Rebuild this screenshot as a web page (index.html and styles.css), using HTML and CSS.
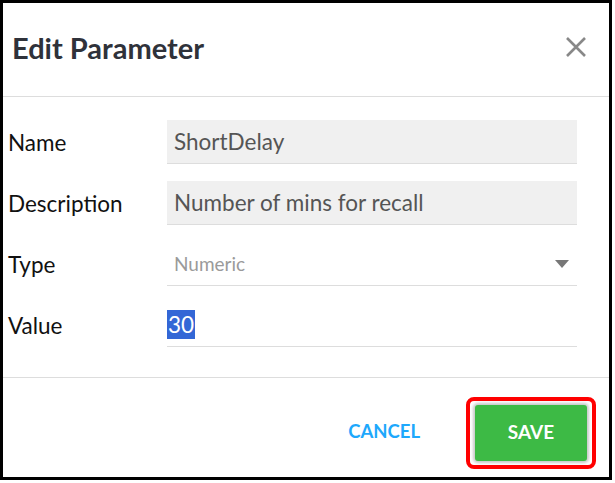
FILE: index.html
```html
<!DOCTYPE html>
<html lang="en">
<head>
    <meta charset="UTF-8">
    <meta name="viewport" content="width=device-width, initial-scale=1.0">
    <link rel="stylesheet" href="styles.css">
    <title>Edit Parameter</title>
</head>
<body>
    <div class="dialogo">
        <div class="cabecera">
            <h2 class="titulo">Edit Parameter</h2>
            <span class="cerrar">
                <svg width="22" height="22" viewBox="0 0 22 22">
                    <path d="M2 2 L20 20 M20 2 L2 20" stroke="#888" stroke-width="2.6" fill="none"/>
                </svg>
            </span>
        </div>

        <div class="cuerpo">
            <div class="fila">
                <label class="etiqueta">Name</label>
                <div class="campo relleno">ShortDelay</div>
            </div>
            <div class="fila">
                <label class="etiqueta">Description</label>
                <div class="campo relleno">Number of mins for recall</div>
            </div>
            <div class="fila">
                <label class="etiqueta">Type</label>
                <div class="campo seleccion">
                    <span class="apagado">Numeric</span>
                    <span class="flecha"></span>
                </div>
            </div>
            <div class="fila">
                <label class="etiqueta">Value</label>
                <div class="campo valor"><span class="marcado">30</span></div>
            </div>
        </div>

        <div class="pie">
            <button class="cancelar">CANCEL</button>
            <div class="resaltado">
                <button class="guardar">SAVE</button>
            </div>
        </div>
    </div>
</body>
</html>
```

FILE: styles.css
```css
* {
    padding: 0;
    margin: 0;
    box-sizing: border-box;
    font-family: 'Lato', sans-serif;
}
body {
    background: #fff;
}
.dialogo {
    width: 612px;
    height: 480px;
    border: 3px solid #000;
    display: flex;
    flex-direction: column;
}
.cabecera {
    height: 94px;
    padding: 0 22px 5px 9px;
    display: flex;
    justify-content: space-between;
    align-items: center;
    border-bottom: 1px solid #ddd;
}
.titulo {
    font-size: 29px;
    font-weight: 700;
    color: #2f323a;
}
.cerrar {
    display: flex;
}
.cuerpo {
    padding: 23px 32px 30px 5px;
    display: flex;
    flex-direction: column;
    gap: 17px;
    border-bottom: 1px solid #ddd;
}
.fila {
    display: flex;
    align-items: center;
}
.etiqueta {
    width: 159px;
    font-size: 22.5px;
    color: #111;
}
.campo {
    flex: 1;
    height: 44px;
    border-bottom: 1px solid #ddd;
    padding-left: 7px;
    display: flex;
    align-items: center;
    font-size: 22.5px;
    color: #555;
}
.relleno {
    background: #f0f0f0;
}
.seleccion {
    justify-content: space-between;
    padding-right: 8px;
}
.apagado {
    color: #9a9a9a;
    font-size: 19px;
}
.flecha {
    width: 0;
    height: 0;
    border-left: 7px solid transparent;
    border-right: 7px solid transparent;
    border-top: 8px solid #777;
}
.valor {
    padding-left: 0;
}
.marcado {
    background: #3367d6;
    color: #fff;
    line-height: 29px;
    padding: 0 1px;
}
.pie {
    flex: 1;
    display: flex;
    justify-content: flex-end;
    align-items: flex-start;
    padding: 19px 13px 0 0;
    gap: 46px;
}
.cancelar {
    border: none;
    background: none;
    color: #1ea8fc;
    font-size: 18.5px;
    font-weight: 700;
    margin-top: 23px;
}
.resaltado {
    border: 4px solid #f00;
    border-radius: 8px;
    padding: 4px 5px;
}
.guardar {
    width: 112px;
    height: 56px;
    padding-bottom: 3px;
    border: none;
    border-radius: 3px;
    background: #3dba45;
    color: #fff;
    font-size: 19px;
    font-weight: 700;
    box-shadow: 0 0 3px 2px rgba(0, 0, 0, 0.22);
}
```
